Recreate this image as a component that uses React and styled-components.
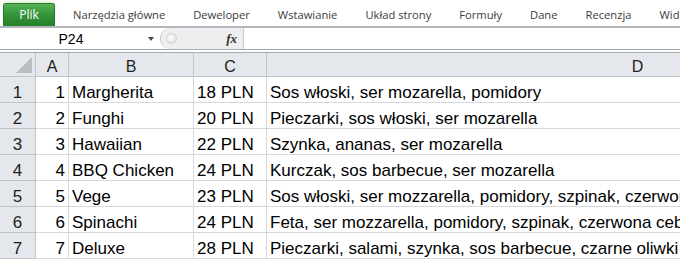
import React from "react";
import styled, { createGlobalStyle } from "styled-components";

const tabs = [
  "Narzędzia główne",
  "Deweloper",
  "Wstawianie",
  "Układ strony",
  "Formuły",
  "Dane",
  "Recenzja",
  "Widok",
];

const rows = [
  ["1", "Margherita", "18 PLN", "Sos włoski, ser mozarella, pomidory"],
  ["2", "Funghi", "20 PLN", "Pieczarki, sos włoski, ser mozarella"],
  ["3", "Hawaiian", "22 PLN", "Szynka, ananas, ser mozarella"],
  ["4", "BBQ Chicken", "24 PLN", "Kurczak, sos barbecue, ser mozarella"],
  ["5", "Vege", "23 PLN", "Sos włoski, ser mozzarella, pomidory, szpinak, czerwona cebula"],
  ["6", "Spinachi", "24 PLN", "Feta, ser mozzarella, pomidory, szpinak, czerwona cebula"],
  ["7", "Deluxe", "28 PLN", "Pieczarki, salami, szynka, sos barbecue, czarne oliwki"],
];

const App = () => {
  return (
    <>
      <GlobalStyle />
      <Window>
        <TabBar>
          <FileTab>Plik</FileTab>
          {tabs.map((t) => (
            <Tab key={t}>{t}</Tab>
          ))}
        </TabBar>
        <FormulaBar>
          <NameBox>
            <NameText>P24</NameText>
            <Arrow />
          </NameBox>
          <FxHolder>
            <Knob />
            <Fx>fx</Fx>
          </FxHolder>
          <FormulaInput />
        </FormulaBar>
        <Sheet>
          <Corner>
            <Triangle />
          </Corner>
          {["A", "B", "C", "D"].map((c) => (
            <ColHead key={c}>{c}</ColHead>
          ))}
          {rows.map((r, i) => (
            <React.Fragment key={i}>
              <RowHead>{i + 1}</RowHead>
              <Cell $right>{r[0]}</Cell>
              <Cell>{r[1]}</Cell>
              <Cell>{r[2]}</Cell>
              <Cell>{r[3]}</Cell>
            </React.Fragment>
          ))}
        </Sheet>
      </Window>
    </>
  );
};

export default App;

const GlobalStyle = createGlobalStyle`
  body {
    margin: 0;
    overflow: hidden;
    background: #ffffff;
  }
`;

const Window = styled.div`
  width: 680px;
  height: 261px;
  overflow: hidden;
  background: #ffffff;
`;

const TabBar = styled.div`
  height: 28px;
  display: flex;
  align-items: flex-end;
  padding-left: 3px;
  border-bottom: 2px solid #b3b7bc;
  box-sizing: border-box;
  font-family: "Open Sans", "Noto Sans", sans-serif;
  font-size: 11.2px;
  color: #3c3c3c;
  white-space: nowrap;
  overflow: hidden;
`;

const FileTab = styled.div`
  flex-shrink: 0;
  width: 52px;
  height: 23px;
  margin-right: 4px;
  border-radius: 3px 3px 0 0;
  background: linear-gradient(#55b255, #33933a 50%, #25802a);
  border: 1px solid #2a7a2a;
  border-bottom: none;
  box-sizing: border-box;
  color: #ffffff;
  font-size: 12px;
  display: flex;
  align-items: center;
  justify-content: center;
  padding-bottom: 1px;
  box-shadow: 0 -2px 3px #dff0d8;
`;

const Tab = styled.div`
  flex-shrink: 0;
  height: 23px;
  display: flex;
  align-items: center;
  padding: 0 14px;
  padding-bottom: 1px;
  box-sizing: border-box;
`;

const FormulaBar = styled.div`
  height: 22px;
  display: flex;
  border-bottom: 1px solid #a8acb2;
  box-sizing: border-box;
  margin-bottom: 2px;
`;

const NameBox = styled.div`
  width: 160px;
  display: flex;
  align-items: center;
  font-family: "Liberation Sans", Arial, sans-serif;
  font-size: 14px;
  color: #000;
`;

const NameText = styled.div`
  width: 142px;
  text-align: center;
`;

const Arrow = styled.div`
  width: 0;
  height: 0;
  border-left: 3.5px solid transparent;
  border-right: 3.5px solid transparent;
  border-top: 4px solid #444;
  margin-left: 6px;
`;

const FxHolder = styled.div`
  width: 84px;
  background: #eceef0;
  border-right: 1px solid #c6c8cb;
  border-radius: 10px 0 0 10px;
  display: flex;
  align-items: center;
  justify-content: space-between;
  padding-right: 6px;
  box-sizing: border-box;
  border-left: 1px solid #c4c6c9;
`;

const Knob = styled.div`
  width: 9px;
  height: 9px;
  border-radius: 50%;
  background: radial-gradient(circle at 40% 40%, #ffffff, #d4d6d9);
  border: 1px solid #d0d2d5;
  margin-left: 5px;
`;

const Fx = styled.div`
  font-family: "Liberation Serif", "Times New Roman", serif;
  font-style: italic;
  font-weight: bold;
  font-size: 13px;
  color: #333;
`;

const FormulaInput = styled.div`
  flex: 1;
`;

const Sheet = styled.div`
  border-top: 1px solid #a8acb2;
  display: grid;
  grid-template-columns: 36px 33px 125px 73px 742px;
  grid-template-rows: 24px repeat(7, 26px);
  font-family: "Liberation Sans", Arial, sans-serif;
  font-size: 17px;
  line-height: 17px;
  color: #000;
`;

const HeadBase = styled.div`
  background: #e4e7eb;
  border-right: 1px solid #c1c5ca;
  border-bottom: 1px solid #c1c5ca;
  box-sizing: border-box;
  display: flex;
  justify-content: center;
  color: #1e1e1e;
`;

const Corner = styled(HeadBase)`
  position: relative;
`;

const Triangle = styled.div`
  position: absolute;
  right: 3px;
  bottom: 3px;
  width: 0;
  height: 0;
  border-left: 16px solid transparent;
  border-bottom: 16px solid #b9bcc0;
`;

const ColHead = styled(HeadBase)`
  align-items: center;
  font-size: 16px;
  padding-top: 3px;
`;

const RowHead = styled(HeadBase)`
  align-items: flex-end;
  padding-bottom: 1px;
`;

const Cell = styled.div`
  border-right: 1px solid #d6d8db;
  border-bottom: 1px solid #d6d8db;
  box-sizing: border-box;
  display: flex;
  align-items: flex-end;
  justify-content: ${(p) => (p.$right ? "flex-end" : "flex-start")};
  padding: 0 3px 1px 3px;
  white-space: nowrap;
  overflow: hidden;
`;
